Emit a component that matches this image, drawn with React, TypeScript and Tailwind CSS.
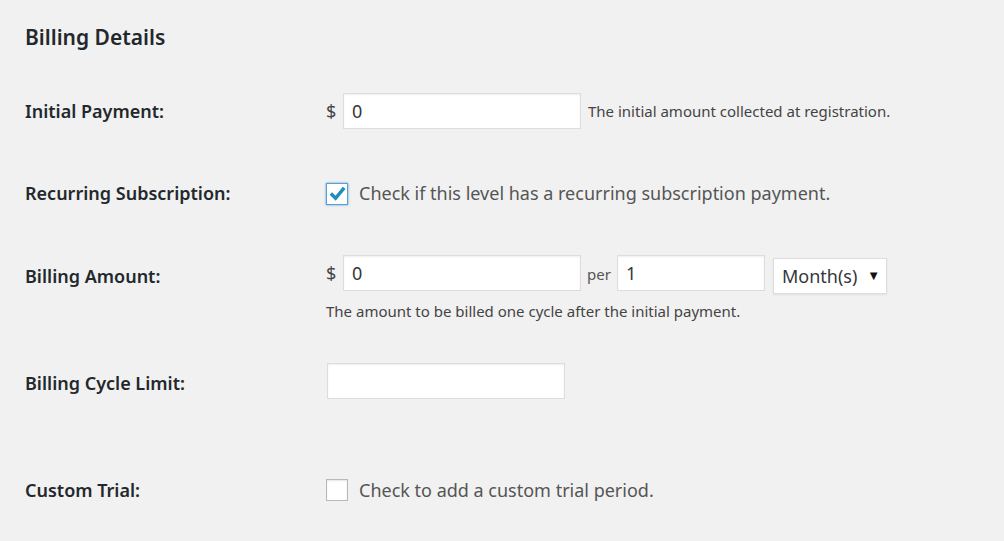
import React from "react";

const font = { fontFamily: '"Noto Sans", "Open Sans", sans-serif' };

function TextInput({ value, className }: { value?: string; className: string }) {
  return (
    <input
      readOnly
      value={value ?? ""}
      className={`h-[36px] border border-[#dddddd] bg-white px-[8px] text-[18px] text-[#32373c] shadow-[inset_0_1px_2px_rgba(0,0,0,0.07)] outline-none ${className}`}
    />
  );
}

function Checkbox({ checked }: { checked?: boolean }) {
  return (
    <span
      className={`flex h-[22px] w-[22px] shrink-0 items-center justify-center bg-white ${
        checked
          ? "border border-[#5b9dd9] shadow-[0_0_2px_rgba(30,140,190,0.8)]"
          : "border border-[#b4b9be] shadow-[inset_0_1px_2px_rgba(0,0,0,0.1)]"
      }`}
    >
      {checked && (
        <svg viewBox="0 0 20 20" className="h-[19px] w-[19px]">
          <path d="M3 10 L8 15 L17 4" fill="none" stroke="#1e8cbe" strokeWidth="3.6" strokeLinejoin="miter" />
        </svg>
      )}
    </span>
  );
}

function Label({ children }: { children: React.ReactNode }) {
  return <div className="w-[301px] shrink-0 text-[18px] font-semibold text-[#23282d]">{children}</div>;
}

export default function App() {
  return (
    <div className="min-h-[541px] w-full bg-[#f1f1f1] pl-[25px]" style={font}>
      <h2 className="pt-[21px] text-[21px] leading-[32px] font-semibold text-[#23282d]">Billing Details</h2>

      {/* Initial payment */}
      <div className="mt-[40px] flex items-center">
        <Label>Initial Payment:</Label>
        <span className="w-[17px] text-[18px] text-[#444]">$</span>
        <TextInput value="0" className="w-[238px]" />
        <span className="ml-[7px] text-[15px] text-[#444]">The initial amount collected at registration.</span>
      </div>

      {/* Recurring */}
      <div className="mt-[51px] flex items-center">
        <Label>Recurring Subscription:</Label>
        <Checkbox checked />
        <span className="ml-[11px] text-[18px] text-[#555]">Check if this level has a recurring subscription payment.</span>
      </div>

      {/* Billing amount */}
      <div className="mt-[48px] flex items-start">
        <div className="mt-[3px] flex h-[36px] items-center">
          <Label>Billing Amount:</Label>
        </div>
        <div className="flex flex-col">
          <div className="flex items-start">
            <span className="flex h-[36px] w-[17px] items-center text-[18px] text-[#444]">$</span>
            <TextInput value="0" className="w-[238px]" />
            <span className="flex h-[38px] w-[36px] items-center justify-center text-[15px] text-[#555]">per</span>
            <TextInput value="1" className="w-[148px]" />
            <div className="ml-[8px] mt-[3px] flex h-[36px] w-[114px] items-center justify-between border border-[#dddddd] bg-white pl-[8px] pr-[6px] shadow-[0_1px_2px_rgba(0,0,0,0.07)]">
              <span className="text-[18px] text-[#32373c]">Month(s)</span>
              <span className="text-[13px] text-[#111]">▼</span>
            </div>
          </div>
          <p className="mt-[6px] text-[15px] text-[#444]">The amount to be billed one cycle after the initial payment.</p>
        </div>
      </div>

      {/* Billing cycle limit */}
      <div className="mt-[40px] flex items-center">
        <div className="mt-[6px]">
          <Label>Billing Cycle Limit:</Label>
        </div>
        <TextInput className="ml-[1px] w-[238px]" />
      </div>

      {/* Custom trial */}
      <div className="mt-[78px] flex items-center">
        <Label>Custom Trial:</Label>
        <Checkbox />
        <span className="ml-[11px] text-[18px] text-[#555]">Check to add a custom trial period.</span>
      </div>
    </div>
  );
}
